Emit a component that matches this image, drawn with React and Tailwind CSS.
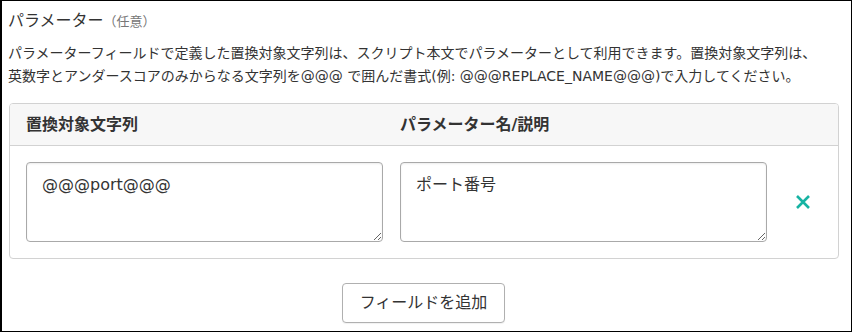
const FONT = { fontFamily: '"DejaVu Sans", "Noto Sans CJK JP", sans-serif' }

const Field = ({ value }) => (
  <textarea
    defaultValue={value}
    className="h-[80px] w-full resize-y rounded-[4px] border border-[#a9a9a9] bg-white px-[15px] py-[10px] text-[16px] leading-[24px] text-[#333] outline-none shadow-[inset_0_1px_2px_rgba(0,0,0,0.08)]"
  />
)

export default function App() {
  const rows = [{ key: '@@@port@@@', label: 'ポート番号' }]

  return (
    <div
      style={FONT}
      className="h-[332px] w-[852px] overflow-hidden border border-l-2 border-black bg-white pl-[6px] pr-[12px] text-[#333]"
    >
      {/* Title */}
      <div className="mt-[8px] flex items-baseline text-[16px] leading-[24px]">
        <span>パラメーター</span>
        <span className="text-[13px] text-[#777]">（任意）</span>
      </div>

      {/* Description */}
      <p className="mt-[8px] text-[14px] leading-[23px]">
        パラメーターフィールドで定義した置換対象文字列は、スクリプト本文でパラメーターとして利用できます。置換対象文字列は、
        <br />
        英数字とアンダースコアのみからなる文字列を@@@ で囲んだ書式(例: @@@REPLACE_NAME@@@)で入力してください。
      </p>

      {/* Parameter table */}
      <div className="ml-[1px] mt-[15px] overflow-hidden rounded-[4px] border border-[#d2d2d2]">
        <div className="grid h-[42px] grid-cols-[357px_367px_1fr] items-center gap-x-[17px] border-b border-[#d2d2d2] bg-[#f7f7f7] px-[16px] text-[16px] font-bold">
          <div>置換対象文字列</div>
          <div>パラメーター名/説明</div>
          <div />
        </div>
        {rows.map((row) => (
          <div
            key={row.key}
            className="grid grid-cols-[357px_367px_1fr] items-center gap-x-[17px] px-[16px] py-[16px]"
          >
            <Field value={row.key} />
            <Field value={row.label} />
            <button className="flex items-center justify-center text-[#17b3a3]">
              <svg width="16" height="16" viewBox="0 0 16 16">
                <path d="M2 2L14 14M14 2L2 14" stroke="currentColor" strokeWidth="2.6" strokeLinecap="butt" />
              </svg>
            </button>
          </div>
        ))}
      </div>

      {/* Add field */}
      <div className="mt-[24px] flex justify-center">
        <button className="h-[40px] rounded-[4px] border border-[#b0b0b0] bg-white px-[17px] text-[16px] text-[#333] shadow-[0_1px_1px_rgba(0,0,0,0.06)]">
          フィールドを追加
        </button>
      </div>
    </div>
  )
}
